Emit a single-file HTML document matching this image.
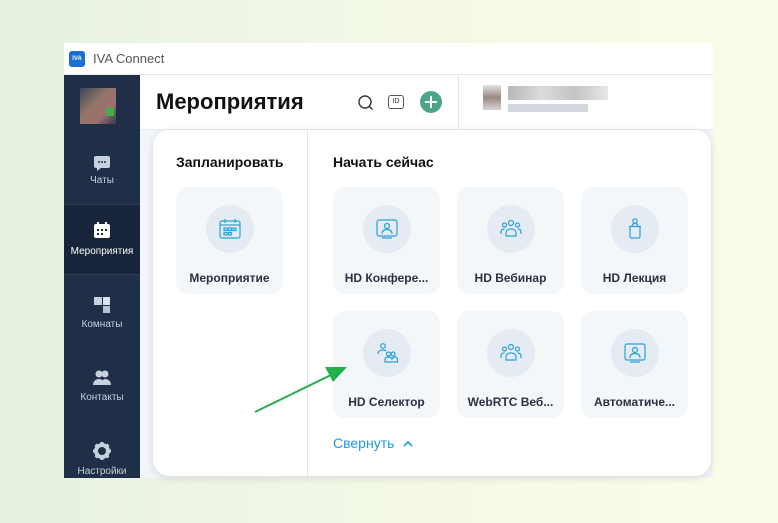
<!DOCTYPE html>
<html><head><meta charset="utf-8"><style>
*{margin:0;padding:0;box-sizing:border-box}
body{width:778px;height:523px;overflow:hidden;background:linear-gradient(90deg,#e6f1e2 0%,#f3f8e6 50%,#fbfde8 100%);font-family:"Liberation Sans",sans-serif;position:relative}
.win{position:absolute;left:64px;top:43px;width:649px;height:435px;background:#fff;overflow:hidden}
.title{position:absolute;left:0;top:0;width:649px;height:32px;background:#fff;border-bottom:1px solid #e3e6ea}
.logo{position:absolute;left:5px;top:8px;width:16px;height:16px;border-radius:3px;background:#1a6fd6;color:#fff;font-size:6px;font-weight:bold;text-align:center;line-height:16px}
.title span{position:absolute;left:29px;top:8px;font-size:13px;color:#555}
.side{position:absolute;left:0;top:32px;width:76px;height:403px;background:#1f2f47}
.nav{position:absolute;left:0;width:76px;height:72px;text-align:center;color:#c7cfdb;font-size:10px}
.nav svg{display:block;margin:0 auto}
.nav.act{background:#17243a;color:#fff;border-top:1px solid #2c3c55;border-bottom:1px solid #2c3c55}
.hdr{position:absolute;left:76px;top:32px;width:573px;height:55px;border-bottom:1px solid #e6e9ee}
.hdr h1{position:absolute;left:16px;top:14px;font-size:22px;font-weight:bold;color:#111}
.list{position:absolute;left:76px;top:87px;width:573px;height:348px;background:#f2f5f9}
.pop{position:absolute;left:153px;top:130px;width:558px;height:346px;background:#fff;border-radius:16px;box-shadow:0 2px 8px rgba(0,0,0,.12)}
.div{position:absolute;left:154px;top:0;width:1px;height:346px;background:#e3e7ec}
.h{position:absolute;top:24px;font-size:14px;font-weight:bold;color:#111}
.card{position:absolute;width:107px;height:107px;background:#f4f7fa;border-radius:12px;text-align:center}
.circ{position:absolute;left:30px;top:18px;width:48px;height:48px;border-radius:50%;background:#e4ebf3}
.circ svg{position:absolute;left:12px;top:12px}
.card b{position:absolute;left:0;right:0;top:84px;font-size:12px;color:#2a3140}
.fold{position:absolute;left:180px;top:305px;font-size:14px;color:#1e9be0}
</style></head><body>
<div class="win">
 <div class="title"><div class="logo">IVA</div><span>IVA Connect</span></div>
 <div class="side">
  <div style="position:absolute;left:16px;top:13px;width:36px;height:36px;background:linear-gradient(135deg,#3a4558,#8e7566 40%,#a07070 70%,#2d3a4c)"></div>
  <div style="position:absolute;left:42px;top:33px;width:8px;height:8px;background:#3bb34a"></div>
  <div class="nav" style="top:72px;padding-top:7px"><svg width="18" height="18" viewBox="0 0 18 18"><path d="M3 2h12a2 2 0 0 1 2 2v8a2 2 0 0 1-2 2H8l-4 3v-3H3a2 2 0 0 1-2-2V4a2 2 0 0 1 2-2z" fill="#c7d1de"/><circle cx="6" cy="8" r="1" fill="#1f2f47"/><circle cx="9" cy="8" r="1" fill="#1f2f47"/><circle cx="12" cy="8" r="1" fill="#1f2f47"/></svg><div style="margin-top:3px">Чаты</div></div>
  <div class="nav act" style="top:129px;height:71px;padding-top:16px"><svg width="18" height="18" viewBox="0 0 18 18"><rect x="1" y="3" width="16" height="14" rx="2" fill="#fff"/><rect x="4" y="1" width="2" height="4" fill="#fff"/><rect x="12" y="1" width="2" height="4" fill="#fff"/><g fill="#17243a"><rect x="4" y="8" width="2" height="2"/><rect x="8" y="8" width="2" height="2"/><rect x="12" y="8" width="2" height="2"/><rect x="4" y="12" width="2" height="2"/><rect x="8" y="12" width="2" height="2"/></g></svg><div style="margin-top:7px">Мероприятия</div></div>
  <div class="nav" style="top:215px;padding-top:6px"><svg width="18" height="18" viewBox="0 0 18 18"><rect x="1" y="1" width="8" height="8" fill="#c7d1de"/><rect x="10" y="1" width="7" height="8" fill="#dde4ee"/><rect x="10" y="10" width="7" height="7" fill="#b8c3d2"/></svg><div style="margin-top:5px">Комнаты</div></div>
  <div class="nav" style="top:288px;padding-top:6px"><svg width="20" height="18" viewBox="0 0 20 18"><circle cx="7" cy="5" r="3.5" fill="#c7d1de"/><circle cx="13" cy="5" r="3.5" fill="#c7d1de"/><path d="M1 16c0-4 3-6 6-6s6 2 6 6z M9 16c0-3 2-6 4-6 3 0 6 2 6 6z" fill="#c7d1de"/></svg><div style="margin-top:5px">Контакты</div></div>
  <div class="nav" style="top:362px;padding-top:4px"><svg width="20" height="20" viewBox="0 0 20 20"><circle cx="10" cy="10" r="6" fill="none" stroke="#c7d1de" stroke-width="4"/><g stroke="#c7d1de" stroke-width="3"><path d="M10 1v4M10 15v4M1 10h4M15 10h4M3.6 3.6l2.8 2.8M13.6 13.6l2.8 2.8M3.6 16.4l2.8-2.8M13.6 6.4l2.8-2.8"/></g></svg><div style="margin-top:5px">Настройки</div></div>
 </div>
 <div class="list"></div>
 <div class="hdr"><h1>Мероприятия</h1>
  <svg style="position:absolute;left:218px;top:20px" width="16" height="16" viewBox="0 0 16 16"><circle cx="7" cy="7" r="6" fill="none" stroke="#333" stroke-width="1.4"/><path d="M11.5 11.5l3 3" stroke="#333" stroke-width="1.4"/></svg>
  <div style="position:absolute;left:248px;top:20px;width:16px;height:14px;border:1.3px solid #555;border-radius:3px;font-size:7px;text-align:center;line-height:11px;color:#333">ID</div>
  <div style="position:absolute;left:280px;top:16px;width:22px;height:22px;border-radius:50%;background:#4aa58a"><svg width="22" height="22"><path d="M11 5v12M5 11h12" stroke="#fff" stroke-width="2"/></svg></div>
  <div style="position:absolute;left:318px;top:0;width:1px;height:55px;background:#e3e6ea"></div>
  <div style="position:absolute;left:343px;top:10px;width:18px;height:25px;background:linear-gradient(#ddd,#806b60,#ccc);opacity:.8"></div>
  <div style="position:absolute;left:368px;top:11px;width:100px;height:14px;background:linear-gradient(90deg,#999,#ccc,#aaa,#ddd);opacity:.7"></div>
  <div style="position:absolute;left:368px;top:29px;width:80px;height:8px;background:#c8cdd6;opacity:.8"></div>
 </div>
</div>
<div class="pop">
 <div class="div"></div>
 <div class="h" style="left:23px">Запланировать</div>
 <div class="h" style="left:180px">Начать сейчас</div>
 <div class="card" style="left:23px;top:57px"><div class="circ"><svg width="24" height="24" viewBox="0 0 24 24" fill="none" stroke="#2aa0d8" stroke-width="1.2"><rect x="2" y="4" width="20" height="17" rx="2"/><path d="M2 8h20M7 2v4M17 2v4"/><rect x="6" y="11" width="3" height="2.5"/><rect x="10.5" y="11" width="3" height="2.5"/><rect x="15" y="11" width="3" height="2.5"/><rect x="6" y="15.5" width="3" height="2.5"/><rect x="10.5" y="15.5" width="3" height="2.5"/></svg></div><b>Мероприятие</b></div>
 <div class="card" style="left:180px;top:57px"><div class="circ"><svg width="24" height="24" viewBox="0 0 24 24" fill="none" stroke="#2aa0d8" stroke-width="1.2"><rect x="2" y="3" width="20" height="16" rx="2"/><circle cx="12" cy="9" r="2.5"/><path d="M7 17c0-3 2-4.5 5-4.5s5 1.5 5 4.5M7 21h10"/></svg></div><b>HD Конфере...</b></div>
 <div class="card" style="left:304px;top:57px"><div class="circ"><svg width="24" height="24" viewBox="0 0 24 24" fill="none" stroke="#2aa0d8" stroke-width="1.2"><circle cx="12" cy="6" r="2.5"/><circle cx="5.5" cy="8" r="2"/><circle cx="18.5" cy="8" r="2"/><path d="M7 19v-3c0-2.5 2-4 5-4s5 1.5 5 4v3zM2 17v-2c0-2 1.5-3 3.5-3M22 17v-2c0-2-1.5-3-3.5-3"/></svg></div><b>HD Вебинар</b></div>
 <div class="card" style="left:428px;top:57px"><div class="circ"><svg width="24" height="24" viewBox="0 0 24 24" fill="none" stroke="#2aa0d8" stroke-width="1.2"><circle cx="12" cy="4" r="2.2"/><path d="M9 9.5c0-2 1.3-3 3-3s3 1 3 3M6 9.5h12M7 9.5v10a1.5 1.5 0 0 0 1.5 1.5h7a1.5 1.5 0 0 0 1.5-1.5v-10"/></svg></div><b>HD Лекция</b></div>
 <div class="card" style="left:180px;top:181px"><div class="circ"><svg width="24" height="24" viewBox="0 0 24 24" fill="none" stroke="#2aa0d8" stroke-width="1.2"><circle cx="8" cy="5" r="2.3"/><path d="M3 13c0-2.5 2-4 5-4 1.5 0 2.5.3 3.3 1"/><circle cx="13.5" cy="13" r="2"/><circle cx="18" cy="13" r="2"/><path d="M10 21v-2c0-2 1.5-3 3.5-3s3 1 3.5 2c.5-1 1.5-2 3-2 1.5 0 2.5 1 2.5 3v2z"/></svg></div><b>HD Селектор</b></div>
 <div class="card" style="left:304px;top:181px"><div class="circ"><svg width="24" height="24" viewBox="0 0 24 24" fill="none" stroke="#2aa0d8" stroke-width="1.2"><circle cx="12" cy="6" r="2.5"/><circle cx="5.5" cy="8" r="2"/><circle cx="18.5" cy="8" r="2"/><path d="M7 19v-3c0-2.5 2-4 5-4s5 1.5 5 4v3zM2 17v-2c0-2 1.5-3 3.5-3M22 17v-2c0-2-1.5-3-3.5-3"/></svg></div><b>WebRTC Веб...</b></div>
 <div class="card" style="left:428px;top:181px"><div class="circ"><svg width="24" height="24" viewBox="0 0 24 24" fill="none" stroke="#2aa0d8" stroke-width="1.2"><rect x="2" y="3" width="20" height="16" rx="2"/><circle cx="12" cy="9" r="2.5"/><path d="M7 17c0-3 2-4.5 5-4.5s5 1.5 5 4.5M7 21h10"/></svg></div><b>Автоматиче...</b></div>
 <div class="fold">Свернуть <svg width="12" height="8" viewBox="0 0 12 8" style="margin-left:4px"><path d="M2 6l4-4 4 4" fill="none" stroke="#1e9be0" stroke-width="1.6"/></svg></div>
</div>
<svg style="position:absolute;left:0;top:0" width="778" height="523"><path d="M255 412L333 374" stroke="#22b04a" stroke-width="2"/><path d="M347 367L325 367L333 382z" fill="#22b04a"/></svg>
</body></html>
